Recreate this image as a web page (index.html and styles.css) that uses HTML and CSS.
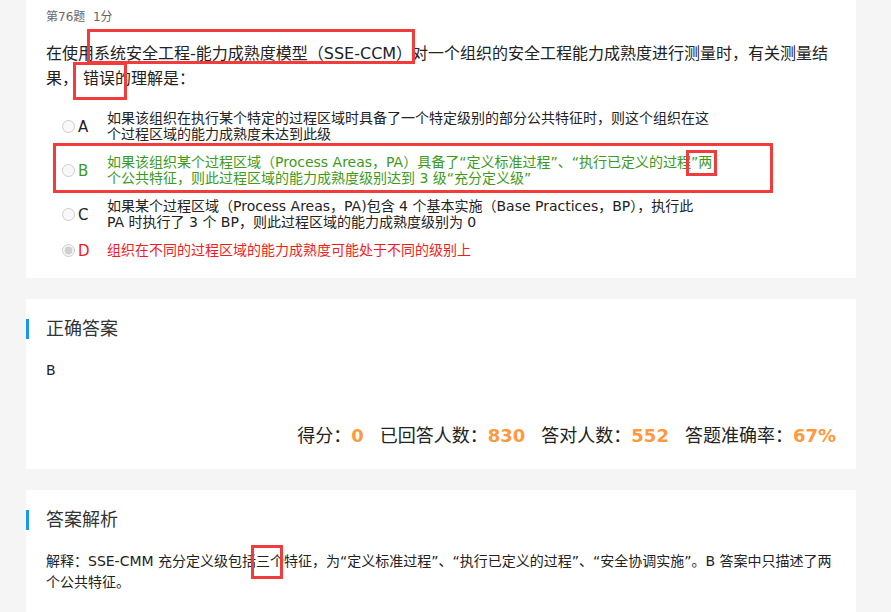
FILE: index.html
```html
<html><head>
<meta charset="UTF-8">
<meta name="viewport" content="width=device-width, initial-scale=1.0">
<title>第76题</title>
<link rel="stylesheet" href="styles.css">
</head>
<body>
<div class="page">

    <!-- question card -->
    <div class="card question-card">
        <div class="q-meta">第76题&nbsp;&nbsp;1分</div>
        <div class="q-title">在使用系统安全工程-能力成熟度模型（SSE-CCM）对一个组织的安全工程能力成熟度进行测量时，有关测量结果，&nbsp;错误的理解是：</div>

        <div class="options">
            <label class="option">
                <input type="radio" name="q76" disabled>
                <span class="opt-letter">A</span>
                <span class="opt-text">如果该组织在执行某个特定的过程区域时具备了一个特定级别的部分公共特征时，则这个组织在这个过程区域的能力成熟度未达到此级</span>
            </label>
            <label class="option right">
                <input type="radio" name="q76" disabled>
                <span class="opt-letter">B</span>
                <span class="opt-text">如果该组织某个过程区域（Process Areas，PA）具备了“定义标准过程”、“执行已定义的过程”两个公共特征，则此过程区域的能力成熟度级别达到 3 级“充分定义级”</span>
            </label>
            <label class="option">
                <input type="radio" name="q76" disabled>
                <span class="opt-letter">C</span>
                <span class="opt-text">如果某个过程区域（Process Areas，PA)包含 4 个基本实施（Base Practices，BP），执行此<br>PA 时执行了 3 个 BP，则此过程区域的能力成熟度级别为 0</span>
            </label>
            <label class="option wrong">
                <input type="radio" name="q76" checked disabled>
                <span class="opt-letter">D</span>
                <span class="opt-text">组织在不同的过程区域的能力成熟度可能处于不同的级别上</span>
            </label>
        </div>
    </div>

    <!-- answer card -->
    <div class="card">
        <h3 class="card-title">正确答案</h3>
        <div class="answer">B</div>
        <div class="stats">
            <span class="stat">得分：<b>0</b></span>
            <span class="stat">已回答人数：<b>830</b></span>
            <span class="stat">答对人数：<b>552</b></span>
            <span class="stat">答题准确率：<b>67%</b></span>
        </div>
    </div>

    <!-- analysis card -->
    <div class="card">
        <h3 class="card-title">答案解析</h3>
        <div class="analysis">解释：SSE-CMM 充分定义级包括三个特征，为“定义标准过程”、“执行已定义的过程”、“安全协调实施”。B 答案中只描述了两个公共特征。</div>
    </div>

    <!-- red review marks drawn over the page -->
    <div class="mark" style="left:87px;top:29px;width:328px;height:35px"></div>
    <div class="mark" style="left:73px;top:62px;width:54px;height:38px"></div>
    <div class="mark" style="left:53px;top:143px;width:720px;height:50px"></div>
    <div class="mark" style="left:686px;top:150px;width:31px;height:26px"></div>
    <div class="mark" style="left:251px;top:545px;width:32px;height:34px"></div>

</div>
</body></html>
```

FILE: styles.css
```css
body {
    margin: 0;
    background-color: #f5f5f5;
    font-family: "DejaVu Sans", "Noto Sans CJK SC", sans-serif;
    color: #222;
}

.page {
    position: relative;
    padding: 0 35px 40px 26px;
    display: flex;
    flex-direction: column;
    gap: 21px;
}

.card {
    background-color: #fff;
    padding: 20px 20px 21px 20px;
}

.question-card {
    padding-top: 8px;
    padding-bottom: 20px;
}

.q-meta {
    font-size: 12px;
    line-height: 18px;
    color: #666;
}

.q-title {
    margin-top: 15px;
    font-size: 16px;
    line-height: 25px;
    color: #222;
}

.options {
    margin-top: 19px;
    display: flex;
    flex-direction: column;
    gap: 12px;
}

.option {
    display: flex;
    align-items: center;
    padding-left: 16px;
    font-size: 14px;
    line-height: 16px;
}

.option input {
    margin: 0;
    width: 13px;
    height: 13px;
}

.opt-letter {
    width: 32px;
    padding-left: 3px;
    box-sizing: border-box;
    font-size: 15px;
    position: relative;
    top: 1px;
}

.opt-text {
    width: 614px;
}

.option.right {
    color: #3d9a1c;
}

.option.wrong {
    color: #f21c1c;
}

.card-title {
    margin: 0 0 0 -20px;
    padding-left: 17px;
    border-left: 3px solid #1a98f0;
    font-size: 18px;
    line-height: 20px;
    font-weight: normal;
    color: #333;
}

.answer {
    margin-top: 21px;
    font-size: 14px;
    line-height: 20px;
}

.stats {
    margin-top: 44px;
    display: flex;
    justify-content: flex-end;
    gap: 16px;
    font-size: 18px;
    line-height: 24px;
    color: #222;
}

.stat b {
    color: #fd9a40;
    font-weight: bold;
}

.analysis {
    margin-top: 21px;
    font-size: 14px;
    line-height: 21px;
}

.mark {
    position: absolute;
    box-sizing: border-box;
    border: 3px solid #f23c3c;
}
```
